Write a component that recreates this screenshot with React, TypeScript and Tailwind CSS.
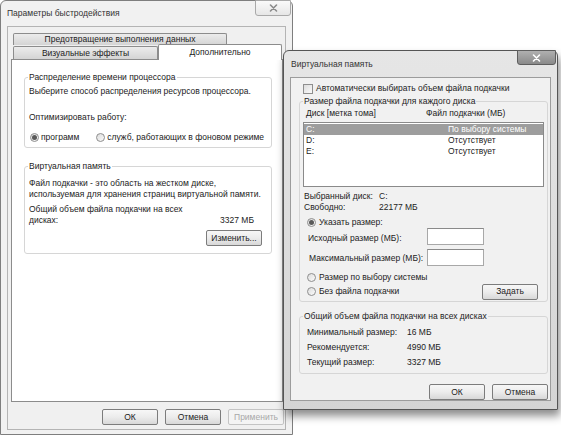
import React from 'react';

// small Windows 7 style controls, grayscale like the screenshot
const Btn: React.FC<{ label: string; disabled?: boolean; className?: string }> = ({ label, disabled, className = '' }) => (
  <div
    className={`flex items-center justify-center w-[56px] h-[16px] rounded-[2px] border shrink-0 ${
      disabled
        ? 'border-[#c4c4c4] text-[#a8a8a8] bg-[#f4f4f4]'
        : 'border-[#7c7c7c] text-[#222] bg-linear-to-b from-[#f7f7f7] via-[#ececec] to-[#d8d8d8]'
    } ${className}`}
  >
    {label}
  </div>
);

const Radio: React.FC<{ checked?: boolean }> = ({ checked }) => (
  <span className="w-[9px] h-[9px] rounded-full border border-[#8e8e8e] bg-linear-to-br from-[#dcdcdc] to-[#fbfbfb] flex items-center justify-center shrink-0">
    {checked && <span className="w-[5px] h-[5px] rounded-full bg-[#5a5a5a]" />}
  </span>
);

const Group: React.FC<{ label: string; labelBg: string; className?: string; children?: React.ReactNode }> = ({
  label,
  labelBg,
  className = '',
  children,
}) => (
  <div className={`relative border border-[#d6d6d6] rounded-[3px] ${className}`}>
    <span className={`absolute -top-[6px] left-[3px] px-[1px] leading-[11px] ${labelBg}`}>{label}</span>
    {children}
  </div>
);

const CloseX: React.FC<{ color: string }> = ({ color }) => (
  <svg width="9" height="8" viewBox="0 0 9 8">
    <path d="M1.5 1 L7.5 7 M7.5 1 L1.5 7" stroke={color} strokeWidth="1.6" strokeLinecap="round" />
  </svg>
);

const PerformanceWindow: React.FC = () => (
  <div className="absolute left-0 top-0 w-[293px] h-[435px] rounded-t-[6px] border border-[#7e7e7e] bg-[#f1f1f1] flex flex-col">
    {/* title bar */}
    <div className="relative h-[25px] flex items-center pl-[6px] text-[#333]">
      <span>Параметры быстродействия</span>
      <div className="absolute right-[1px] -top-px w-[36px] h-[16px] rounded-b-[3px] border border-[#a9a9a9] bg-linear-to-b from-[#fafafa] to-[#e6e6e6] flex items-center justify-center">
        <CloseX color="#8a8a8a" />
      </div>
    </div>

    {/* client */}
    <div className="flex-1 mx-[6px] mb-[4px] border border-[#b4b4b4] bg-[#f0f0f0] flex flex-col">
      {/* tabs */}
      <div className="pt-[6px] pl-[4px] pr-[2px] flex flex-col">
        <div className="ml-[1px] w-[214px] h-[12px] border border-b-0 border-[#8c8c8c] rounded-t-[2px] bg-linear-to-b from-[#ececec] to-[#d4d4d4] flex items-center justify-center">
          Предотвращение выполнения данных
        </div>
        <div className="flex items-end h-[14px]">
          <div className="ml-[1px] w-[145px] h-[13px] border border-b-0 border-[#8c8c8c] rounded-t-[2px] bg-linear-to-b from-[#ececec] to-[#d4d4d4] flex items-center justify-center">
            Визуальные эффекты
          </div>
          <div className="relative z-10 -mb-px w-[124px] h-[16px] border border-b-0 border-[#8c8c8c] rounded-t-[2px] bg-white flex items-center justify-center pb-[1px]">
            Дополнительно
          </div>
        </div>
      </div>

      {/* tab panel */}
      <div className="ml-[3px] mr-[2px] h-[343px] border border-[#8c8c8c] bg-white flex flex-col">
        <Group label="Распределение времени процессора" labelBg="bg-white" className="mt-[17px] ml-[12px] w-[248px] h-[71px] flex flex-col pl-[4px] pt-[8px]">
          <div className="leading-[11px]">Выберите способ распределения ресурсов процессора.</div>
          <div className="leading-[11px] mt-[15px]">Оптимизировать работу:</div>
          <div className="flex items-center h-[11px] mt-[9px] pl-[1px]">
            <Radio checked />
            <span className="ml-[2px]">программ</span>
            <span className="ml-[17px]">
              <Radio />
            </span>
            <span className="ml-[2px]">служб, работающих в фоновом режиме</span>
          </div>
        </Group>

        <Group label="Виртуальная память" labelBg="bg-white" className="mt-[18px] ml-[12px] w-[248px] h-[88px] flex flex-col pl-[4px] pt-[11px] pr-[9px]">
          <div className="leading-[11px]">Файл подкачки - это область на жестком диске,</div>
          <div className="leading-[11px]">используемая для хранения страниц виртуальной памяти.</div>
          <div className="flex items-end justify-between mt-[4px] pr-[8px]">
            <div className="leading-[11px]">
              Общий объем файла подкачки на всех
              <br />
              дисках:
            </div>
            <div className="leading-[11px]">3327 МБ</div>
          </div>
          <div className="flex justify-end mt-[4px]">
            <Btn label="Изменить..." className="h-[15px]" />
          </div>
        </Group>
      </div>

      {/* bottom buttons */}
      <div className="flex justify-end gap-[7px] mt-[7px] pr-[1px]">
        <Btn label="ОК" />
        <Btn label="Отмена" />
        <Btn label="Применить" disabled />
      </div>
    </div>
  </div>
);

const VirtualMemoryWindow: React.FC = () => (
  <div className="absolute left-[283px] top-[50px] w-[275px] h-[360px] rounded-t-[6px] border border-[#555] bg-linear-to-b from-[#e6e6e6] to-[#d4d4d4] shadow-[2px_6px_8px_rgba(0,0,0,0.45)] flex flex-col">
    {/* title bar */}
    <div className="relative h-[26px] flex items-center pl-[7px] text-[#333]">
      <span>Виртуальная память</span>
      <div className="absolute right-[1px] -top-px w-[39px] h-[15px] rounded-b-[3px] border border-[#5e5e5e] bg-linear-to-b from-[#b0b0b0] to-[#8a8a8a] flex items-center justify-center">
        <CloseX color="#ffffff" />
      </div>
    </div>

    {/* client */}
    <div className="flex-1 mx-[6px] mb-[8px] border border-[#9c9c9c] bg-[#f1f1f1] flex flex-col">
      <div className="flex items-center h-[11px] mt-[5px] pl-[12px]">
        <span className="w-[10px] h-[10px] border border-[#8e8e8e] bg-linear-to-br from-[#dcdcdc] to-[#fafafa] shrink-0" />
        <span className="ml-[3px]">Автоматически выбирать объем файла подкачки</span>
      </div>

      <Group label="Размер файла подкачки для каждого диска" labelBg="bg-[#f1f1f1]" className="mt-[7px] ml-[8px] mr-[2px] h-[201px] flex flex-col">
        <div className="flex h-[11px] items-center mt-[6px] pl-[6px]">
          <span className="w-[120px]">Диск [метка тома]</span>
          <span>Файл подкачки (МБ)</span>
        </div>
        <div className="mt-[3px] ml-[3px] w-[241px] h-[65px] border border-[#8a8a8a] bg-white pt-px">
          <div className="flex items-center h-[11px] bg-[#9d9d9d] text-white pl-[2px]">
            <span className="w-[142px]">C:</span>
            <span>По выбору системы</span>
          </div>
          <div className="flex items-center h-[11px] pl-[2px]">
            <span className="w-[142px]">D:</span>
            <span>Отсутствует</span>
          </div>
          <div className="flex items-center h-[11px] pl-[2px]">
            <span className="w-[142px]">E:</span>
            <span>Отсутствует</span>
          </div>
        </div>

        <div className="flex items-center h-[11px] mt-[4px] pl-[4px]">
          <span className="w-[75px]">Выбранный диск:</span>
          <span>C:</span>
        </div>
        <div className="flex items-center h-[11px] pl-[4px]">
          <span className="w-[75px]">Свободно:</span>
          <span>22177 МБ</span>
        </div>

        <div className="flex items-center h-[11px] mt-[4px] pl-[7px]">
          <Radio checked />
          <span className="ml-[3px]">Указать размер:</span>
        </div>
        <div className="flex items-center h-[17px] pl-[8px]">
          <span className="w-[119px] pt-[3px]">Исходный размер (МБ):</span>
          <span className="w-[57px] h-[17px] border border-[#a8a8a8] border-t-[#8a8a8a] bg-white" />
        </div>
        <div className="flex items-center h-[17px] mt-[4px] pl-[9px]">
          <span className="w-[118px] pt-[1px]">Максимальный размер (МБ):</span>
          <span className="w-[57px] h-[17px] border border-[#a8a8a8] border-t-[#8a8a8a] bg-white" />
        </div>
        <div className="flex items-center h-[11px] mt-[6px] pl-[7px]">
          <Radio />
          <span className="ml-[3px]">Размер по выбору системы</span>
        </div>
        <div className="flex items-center h-[15px] mt-[1px] pl-[7px] pr-[9px]">
          <Radio />
          <span className="ml-[3px]">Без файла подкачки</span>
          <Btn label="Задать" className="ml-auto h-[15px]" />
        </div>
      </Group>

      <Group label="Общий объем файла подкачки на всех дисках" labelBg="bg-[#f1f1f1]" className="mt-[14px] ml-[8px] mr-[2px] h-[58px] flex flex-col pt-[8px] pl-[7px]">
        <div className="flex items-center h-[15px]">
          <span className="w-[100px]">Минимальный размер:</span>
          <span>16 МБ</span>
        </div>
        <div className="flex items-center h-[15px]">
          <span className="w-[100px]">Рекомендуется:</span>
          <span>4990 МБ</span>
        </div>
        <div className="flex items-center h-[15px]">
          <span className="w-[100px]">Текущий размер:</span>
          <span>3327 МБ</span>
        </div>
      </Group>

      <div className="flex justify-end gap-[7px] mt-[10px] pr-[2px]">
        <Btn label="ОК" />
        <Btn label="Отмена" />
      </div>
    </div>
  </div>
);

export default function App() {
  return (
    <div className="relative w-[561px] h-[437px] overflow-hidden bg-white text-[#222] text-[8.5px] leading-[11px] font-['Liberation_Sans',Arial,sans-serif]">
      <PerformanceWindow />
      <VirtualMemoryWindow />
    </div>
  );
}
